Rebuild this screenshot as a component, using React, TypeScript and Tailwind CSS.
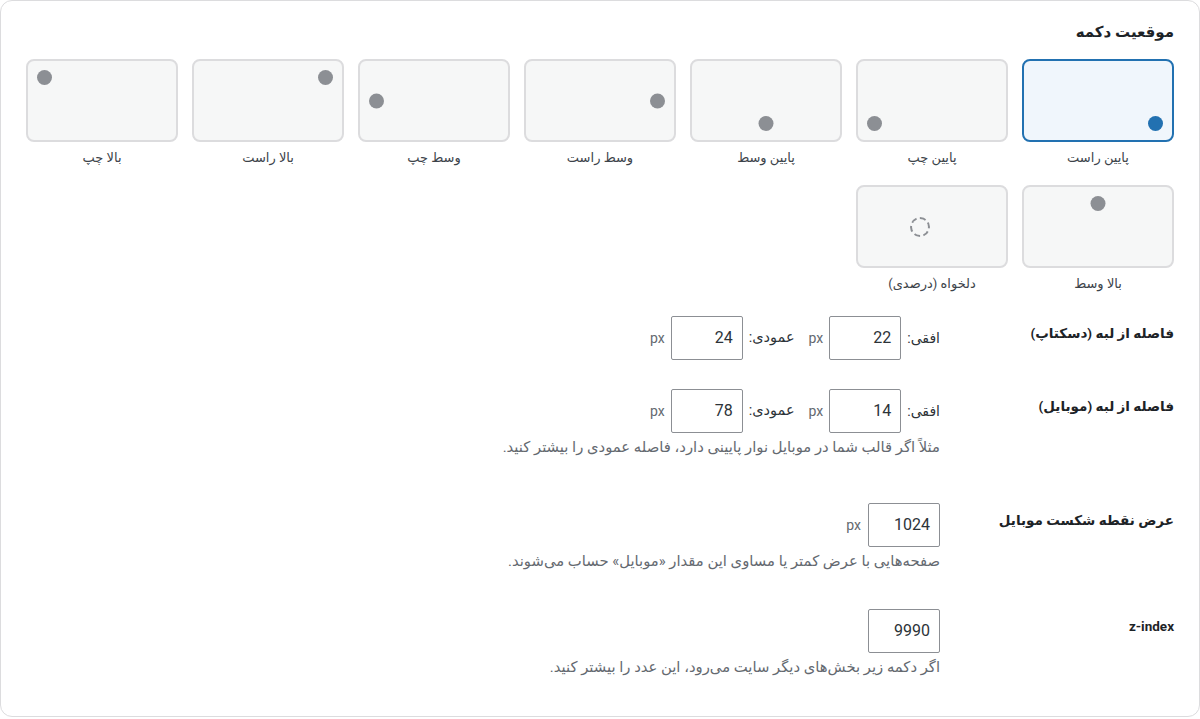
import React from "react";

type Pos = {
  label: string;
  dot: string;
  custom?: boolean;
};

const POSITIONS: Pos[] = [
  { label: "پایین راست", dot: "right-[9px] bottom-[9px]" },
  { label: "پایین چپ", dot: "left-[9px] bottom-[9px]" },
  { label: "پایین وسط", dot: "left-1/2 -translate-x-1/2 bottom-[9px]" },
  { label: "وسط راست", dot: "right-[9px] top-1/2 -translate-y-1/2" },
  { label: "وسط چپ", dot: "left-[9px] top-1/2 -translate-y-1/2" },
  { label: "بالا راست", dot: "right-[9px] top-[9px]" },
  { label: "بالا چپ", dot: "left-[9px] top-[9px]" },
  { label: "بالا وسط", dot: "left-1/2 -translate-x-1/2 top-[9px]" },
  { label: "دلخواه (درصدی)", dot: "", custom: true },
];

function Tile({ pos, selected }: { pos: Pos; selected: boolean }) {
  return (
    <div className="flex flex-col items-center">
      <div
        className={`relative w-full h-[83px] rounded-[8px] border-2 ${
          selected ? "border-[#2271b1] bg-[#f0f6fc]" : "border-[#dcdcde] bg-[#f6f7f7]"
        }`}
      >
        {pos.custom ? (
          // custom position marker sits at a percentage spot, not centered
          <span className="absolute left-[52px] top-1/2 -translate-y-1/2 w-[20px] h-[20px] rounded-full border-2 border-dashed border-[#8c8f94]" />
        ) : (
          <span
            className={`absolute w-[15px] h-[15px] rounded-full ${pos.dot} ${
              selected ? "bg-[#2271b1]" : "bg-[#8c8f94]"
            }`}
          />
        )}
      </div>
      <div className="mt-[7px] text-[13px] leading-[18px] text-[#3c434a]">{pos.label}</div>
    </div>
  );
}

function NumInput({ value }: { value: string }) {
  return (
    <div className="w-[72px] h-[44px] border border-[#8c8f94] rounded-[2px] bg-white flex items-center justify-start pr-[9px] text-[16px] text-[#2c3338]">
      {value}
    </div>
  );
}

function Px() {
  return <span className="text-[14px] text-[#646970]">px</span>;
}

function Row({
  label,
  top,
  children,
  desc,
}: {
  label: string;
  top: string;
  children: React.ReactNode;
  desc?: string;
}) {
  return (
    <div className={`flex items-start ${top}`}>
      <div className="w-[234px] shrink-0 pt-[7px] text-[13.5px] leading-[20px] font-bold text-[#1d2327]">
        {label}
      </div>
      <div className="flex flex-col items-start">
        <div className="flex items-center">{children}</div>
        {desc && (
          <p className="mt-[4px] text-[14.8px] leading-[20px] text-[#646970]">{desc}</p>
        )}
      </div>
    </div>
  );
}

export default function App() {
  return (
    <div
      dir="rtl"
      className="w-[1200px] h-[719px] bg-white"
      style={{ fontFamily: "Roboto, 'DejaVu Sans', sans-serif" }}
    >
      <div className="h-[717px] border border-[#dcdcde] rounded-[12px] bg-white px-[25px] pt-[19px]">
        <h2 className="text-[15px] leading-[24px] font-bold text-[#1d2327]">موقعیت دکمه</h2>

        <div className="mt-[15px] grid grid-cols-7 gap-x-[14px] gap-y-[18px]">
          {POSITIONS.map((p, i) => (
            <Tile key={p.label} pos={p} selected={i === 0} />
          ))}
        </div>

        <Row label="فاصله از لبه (دسکتاپ)" top="mt-[23px]">
          <div className="flex items-center gap-[6px]">
            <span className="text-[14px] text-[#2c3338]">افقی:</span>
            <NumInput value="22" />
            <Px />
          </div>
          <div className="flex items-center gap-[6px] mr-[14px]">
            <span className="text-[14.5px] text-[#2c3338]">عمودی:</span>
            <NumInput value="24" />
            <Px />
          </div>
        </Row>

        <Row
          label="فاصله از لبه (موبایل)"
          top="mt-[29px]"
          desc="مثلاً اگر قالب شما در موبایل نوار پایینی دارد، فاصله عمودی را بیشتر کنید."
        >
          <div className="flex items-center gap-[6px]">
            <span className="text-[14px] text-[#2c3338]">افقی:</span>
            <NumInput value="14" />
            <Px />
          </div>
          <div className="flex items-center gap-[6px] mr-[14px]">
            <span className="text-[14.5px] text-[#2c3338]">عمودی:</span>
            <NumInput value="78" />
            <Px />
          </div>
        </Row>

        <Row
          label="عرض نقطه شکست موبایل"
          top="mt-[46px]"
          desc="صفحه‌هایی با عرض کمتر یا مساوی این مقدار «موبایل» حساب می‌شوند."
        >
          <div className="flex items-center gap-[7px]">
            <NumInput value="1024" />
            <Px />
          </div>
        </Row>

        <Row
          label="z-index"
          top="mt-[38px]"
          desc="اگر دکمه زیر بخش‌های دیگر سایت می‌رود، این عدد را بیشتر کنید."
        >
          <NumInput value="9990" />
        </Row>
      </div>
    </div>
  );
}
